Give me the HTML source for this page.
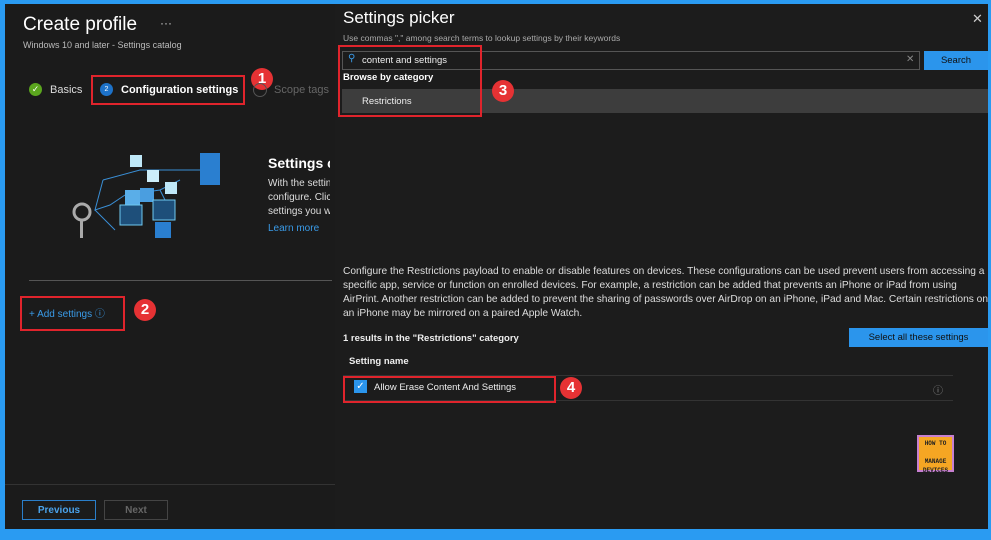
<!DOCTYPE html>
<html><head><style>
body{margin:0;width:991px;height:540px;background:#2a9bf2;position:relative;overflow:hidden;font-family:"Liberation Sans",sans-serif;color:#fff}
.a{position:absolute}
.red{position:absolute;border:2px solid #e0242c}
.num{position:absolute;width:22px;height:22px;border-radius:50%;background:#e63234;color:#fff;font-weight:bold;font-size:15px;text-align:center;line-height:22px}
</style></head><body>
<div class="a" style="left:5px;top:4px;width:983px;height:525px;background:#1b1b1b"></div>
<div class="a" style="left:23px;top:14px;font-size:19px">Create profile</div>
<div class="a" style="left:160px;top:16px;font-size:12px;color:#ccc">···</div>
<div class="a" style="left:23px;top:40px;font-size:9px;color:#bbb">Windows 10 and later - Settings catalog</div>
<div class="a" style="left:29px;top:83px;width:13px;height:13px;border-radius:50%;background:#5ba61e;font-size:9px;text-align:center;line-height:13px">✓</div>
<div class="a" style="left:50px;top:84px;font-size:11px;color:#ddd">Basics</div>
<div class="a" style="left:100px;top:83px;width:13px;height:13px;border-radius:50%;background:#1d72c9;font-size:7px;text-align:center;line-height:13px">2</div>
<div class="a" style="left:121px;top:84px;font-size:11px;font-weight:bold">Configuration settings</div>
<div class="red" style="left:91px;top:75px;width:150px;height:26px"></div>
<div class="num" style="left:251px;top:68px">1</div>
<div class="a" style="left:253px;top:83px;width:12px;height:12px;border-radius:50%;border:1px solid #555"></div>
<div class="a" style="left:274px;top:84px;font-size:11px;color:#666">Scope tags</div>
<svg class="a" style="left:65px;top:150px" width="165" height="92">
<g stroke="#3a8fd6" stroke-width="1" fill="none"><path d="M38 30L75 20L115 20L135 20M38 30L30 60L45 55L60 45M60 45L95 40L115 30M30 60L50 80M95 40L105 60"/></g>
<rect x="60" y="40" width="15" height="15" fill="#5aaee8"/><rect x="75" y="38" width="14" height="14" fill="#4a9ee0"/>
<rect x="65" y="5" width="12" height="12" fill="#bfe8f8"/><rect x="82" y="20" width="12" height="12" fill="#cdeefa"/><rect x="100" y="32" width="12" height="12" fill="#bfe8f8"/>
<rect x="55" y="55" width="22" height="20" fill="#1e4f7a" stroke="#6fc8f0"/><rect x="88" y="50" width="22" height="20" fill="#1e4f7a" stroke="#6fc8f0"/>
<rect x="90" y="72" width="16" height="16" fill="#2a7fd0"/>
<rect x="135" y="3" width="20" height="32" fill="#2a7fd0"/>
<circle cx="17" cy="62" r="8" fill="none" stroke="#aaa" stroke-width="3"/><rect x="15" y="70" width="3" height="18" fill="#aaa"/>
</svg>
<div class="a" style="left:268px;top:155px;font-size:14px;font-weight:bold;width:62px;overflow:hidden;white-space:nowrap">Settings catalog</div>
<div class="a" style="left:268px;top:177px;font-size:10px;line-height:14px;color:#ddd;width:62px;overflow:hidden;white-space:nowrap">With the settings<br>configure. Click<br>settings you want</div>
<div class="a" style="left:268px;top:223px;font-size:10px;color:#3a9be8">Learn more</div>
<div class="a" style="left:29px;top:280px;width:303px;height:1px;background:#555"></div>
<div class="a" style="left:29px;top:305px;font-size:10px;color:#3a9be8">+ Add settings ⓘ</div>
<div class="red" style="left:20px;top:296px;width:101px;height:31px"></div>
<div class="num" style="left:134px;top:299px">2</div>
<div class="a" style="left:5px;top:484px;width:330px;height:1px;background:#333"></div>
<div class="a" style="left:22px;top:500px;width:72px;height:18px;border:1px solid #2a7ec9;color:#4aa3ec;font-size:10px;font-weight:bold;text-align:center;line-height:20px">Previous</div>
<div class="a" style="left:104px;top:500px;width:62px;height:18px;border:1px solid #444;color:#666;font-size:10px;font-weight:bold;text-align:center;line-height:20px">Next</div>
<!-- picker -->
<div class="a" style="left:335px;top:4px;width:653px;height:525px;background:#1c1c1c"></div>
<div class="a" style="left:343px;top:8px;font-size:17px">Settings picker</div>
<div class="a" style="left:972px;top:11px;font-size:13px;color:#ccc">✕</div>
<div class="a" style="left:343px;top:33px;font-size:8.5px;color:#aaa">Use commas "," among search terms to lookup settings by their keywords</div>
<div class="a" style="left:342px;top:51px;width:576px;height:17px;border:1px solid #555"></div>
<div class="a" style="left:348px;top:53px;font-size:10px;color:#3a9be8">⚲</div>
<div class="a" style="left:362px;top:55px;font-size:9.5px;color:#eee">content and settings</div>
<div class="a" style="left:906px;top:54px;font-size:10px;color:#888">✕</div>
<div class="a" style="left:924px;top:51px;width:64px;height:19px;background:#2b95ec;color:#111;font-size:9.5px;text-align:center;line-height:19px">Search</div>
<div class="a" style="left:343px;top:72px;font-size:9.5px;font-weight:bold">Browse by category</div>
<div class="a" style="left:342px;top:89px;width:646px;height:24px;background:#3d3d3d"></div>
<div class="a" style="left:362px;top:96px;font-size:9.5px;color:#eee">Restrictions</div>
<div class="red" style="left:338px;top:45px;width:140px;height:68px"></div>
<div class="num" style="left:492px;top:80px">3</div>
<div class="a" style="left:343px;top:265px;width:648px;font-size:10.2px;line-height:14px;color:#ddd">Configure the Restrictions payload to enable or disable features on devices. These configurations can be used prevent users from accessing a specific app, service or function on enrolled devices. For example, a restriction can be added that prevents an iPhone or iPad from using AirPrint. Another restriction can be added to prevent the sharing of passwords over AirDrop on an iPhone, iPad and Mac. Certain restrictions on an iPhone may be mirrored on a paired Apple Watch.</div>
<div class="a" style="left:343px;top:333px;font-size:9.5px;font-weight:bold;color:#eee">1 results in the "Restrictions" category</div>
<div class="a" style="left:849px;top:328px;width:139px;height:19px;background:#2b95ec;color:#111;font-size:9.5px;text-align:center;line-height:19px">Select all these settings</div>
<div class="a" style="left:349px;top:356px;font-size:9.5px;font-weight:bold;color:#eee">Setting name</div>
<div class="a" style="left:343px;top:375px;width:610px;height:1px;background:#333"></div>
<div class="a" style="left:343px;top:400px;width:610px;height:1px;background:#333"></div>
<div class="a" style="left:354px;top:380px;width:13px;height:13px;background:#2b95ec;font-size:10px;text-align:center;line-height:13px">✓</div>
<div class="a" style="left:374px;top:382px;font-size:9.5px;color:#eee">Allow Erase Content And Settings</div>
<div class="a" style="left:933px;top:382px;font-size:10px;color:#888">ⓘ</div>
<div class="red" style="left:343px;top:376px;width:209px;height:23px"></div>
<div class="num" style="left:560px;top:377px">4</div>
<div class="a" style="left:917px;top:435px;width:37px;height:37px;background:#c77fd0"></div>
<div class="a" style="left:919px;top:437px;width:33px;height:33px;background:#f5a623;color:#222;font-size:6px;font-weight:bold;text-align:center;line-height:9px;font-family:'Liberation Mono',monospace;padding-top:2px;box-sizing:border-box">HOW TO<br><br>MANAGE<br>DEVICES</div>
</body></html>
